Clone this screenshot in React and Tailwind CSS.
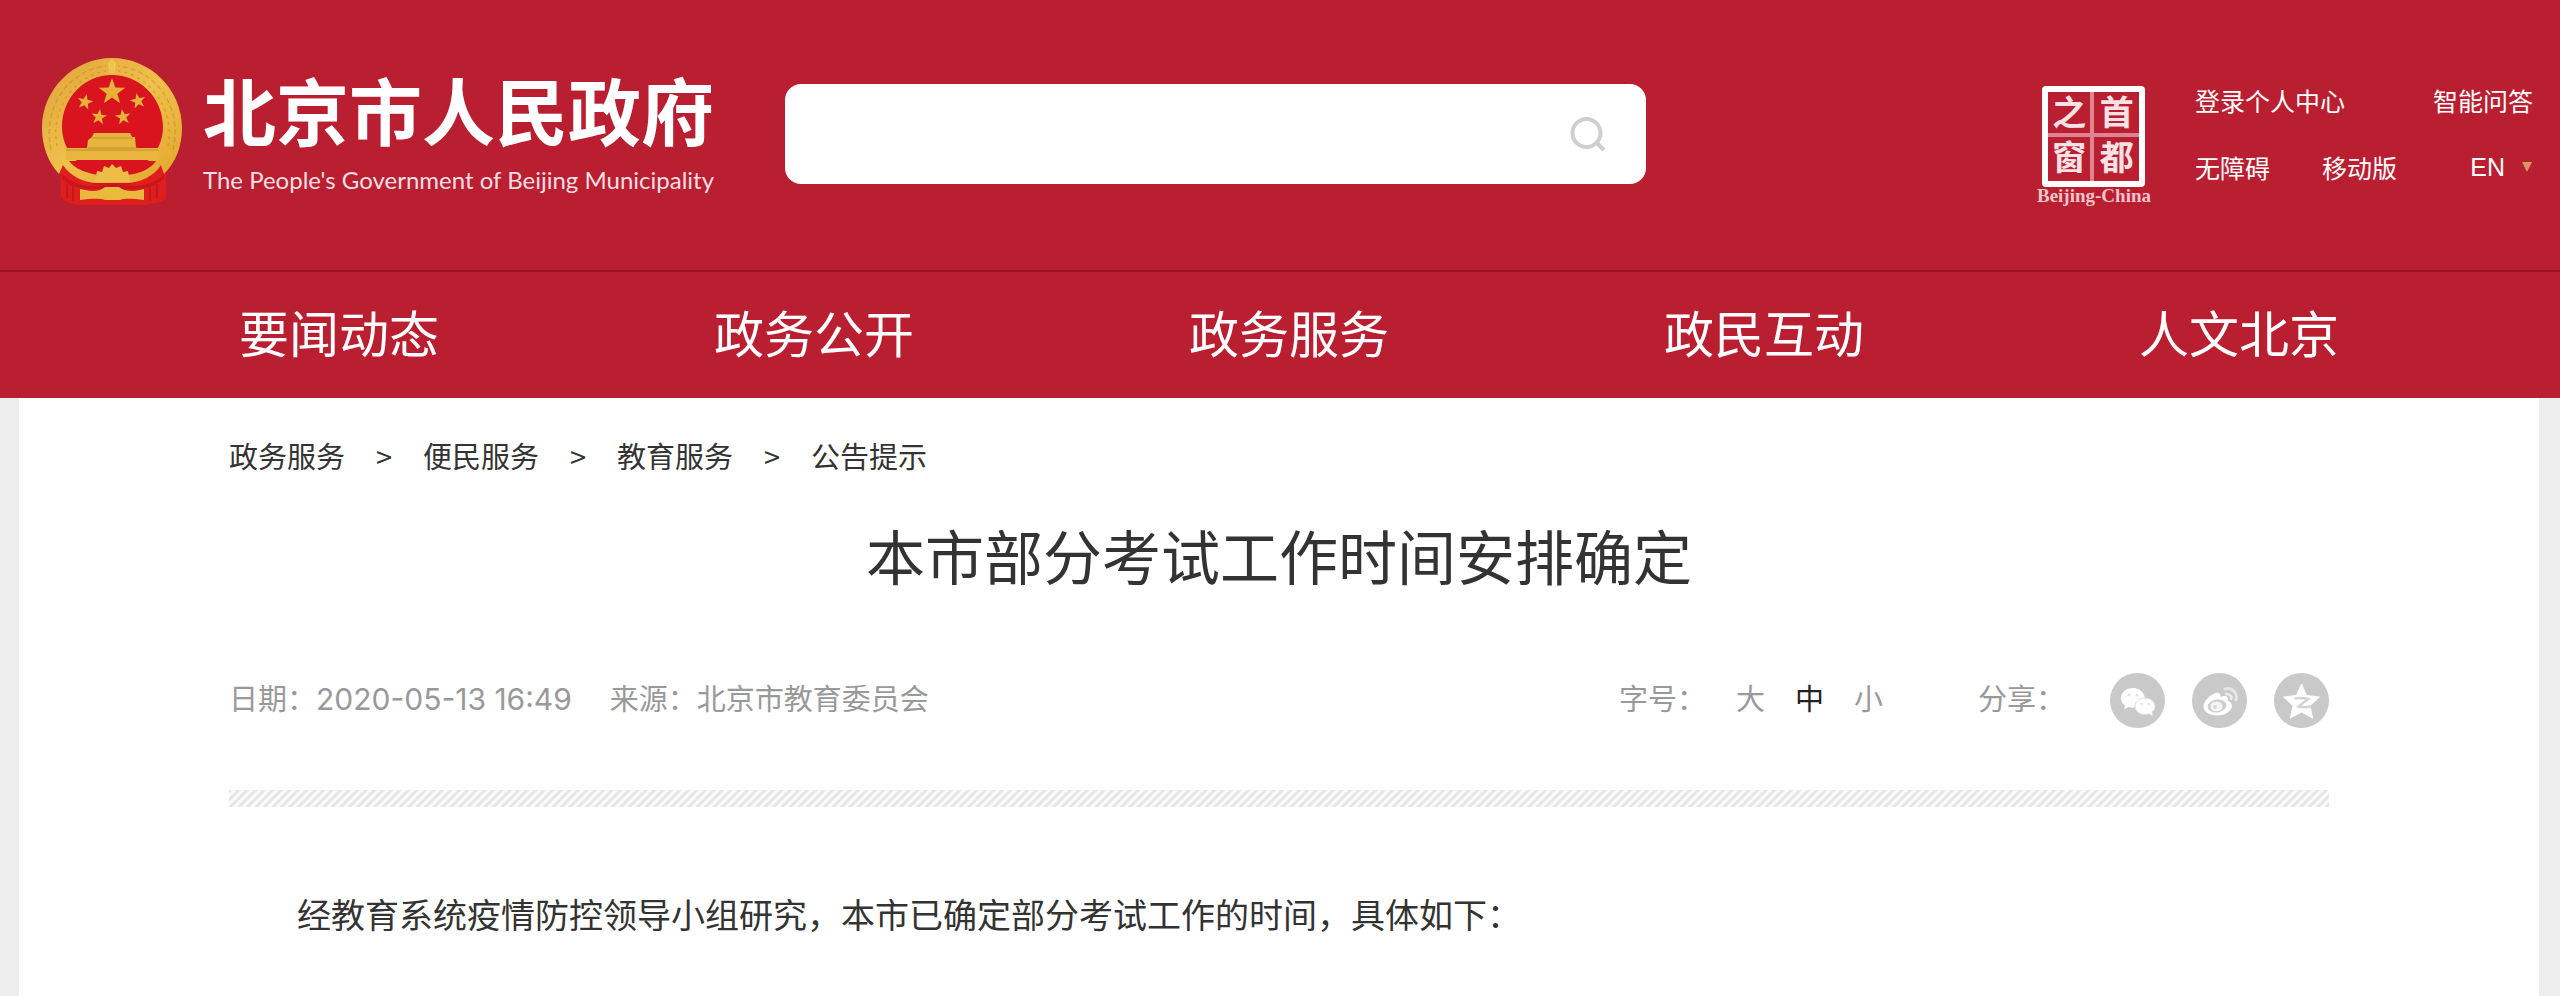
import React from "react";

const STAR = "M0,-10 L2.35,-3.24 9.51,-3.09 3.8,1.24 5.88,8.09 0,4 -5.88,8.09 -3.8,1.24 -9.51,-3.09 -2.35,-3.24Z";

function Emblem() {
  return (
    <svg viewBox="0 0 140 148" className="h-[148px] w-[140px] shrink-0" role="img" aria-label="国徽">
      <defs>
        <linearGradient id="gold" x1="0" y1="0" x2="1" y2="1">
          <stop offset="0" stopColor="#dfa33a" />
          <stop offset="0.5" stopColor="#f0c04a" />
          <stop offset="1" stopColor="#e2a52c" />
        </linearGradient>
      </defs>
      <path d="M18 104 H124 L124 140 C120 146 110 144 104 147 H34 C28 145 22 144 19 138Z" fill="#e01e1e" />
      <circle cx="70" cy="69" r="60" fill="#d9141f" />
      <path
        fillRule="evenodd"
        fill="url(#gold)"
        d="M70 0 C108 0 140 31 140 70 C140 88 134 104 122 116 L119 107 C112 118 98 125 84 125 L56 125 C42 125 28 118 21 107 L17 116 C6 104 0 88 0 70 C0 31 32 0 70 0Z M70 17 C42 17 20 40 20 69 C20 94 40 112 58 116 L82 116 C101 111 121 94 121 69 C121 40 98 17 70 17Z"
      />
      <g fill="none" stroke="#b97d22" strokeOpacity="0.4" strokeWidth="1.5">
        <path d="M9 92 C0 50 26 12 64 8" strokeDasharray="5 3" />
        <path d="M131 92 C141 50 115 12 76 8" strokeDasharray="5 3" />
        <path d="M15 88 C8 52 32 18 64 13" strokeDasharray="3 4" />
        <path d="M126 88 C133 52 109 18 76 13" strokeDasharray="3 4" />
      </g>
      <path d="M66 5 L70 1 L74 5 L73 15 L67 15Z" fill="#f0c355" />
      <g fill="#e6b13a">
        <path d={STAR} transform="translate(70 34) scale(1.4)" />
        <path d={STAR} transform="translate(43 44) scale(0.82) rotate(12)" />
        <path d={STAR} transform="translate(96 43) scale(0.82) rotate(-12)" />
        <path d={STAR} transform="translate(57 59) scale(0.82) rotate(8)" />
        <path d={STAR} transform="translate(81 59) scale(0.82) rotate(-8)" />
      </g>
      <path d="M52 75 H88 L90 79 H93 L94 90 H117 V102 H24 V90 H45 L46 82 L50 79Z" fill="#e8b63f" />
      <path d="M50 80 H91 M46 90 H95 M24 92 H117" stroke="#c48d2c" strokeWidth="1" />
      <path d="M27 103 H114 C108 112 96 116 84 117 H56 C44 115 33 111 27 103Z" fill="#d9141f" />
      <path d="M53 124 L55 113 L60 114 L62 108 L67 110 L70 106 L74 110 L79 108 L81 114 L86 113 L88 124Z" fill="#edbd45" />
      <path d="M20 116 C34 130 50 129 70 126 C92 129 108 130 122 116 L122 121 C106 134 90 131 70 130 C50 131 34 134 20 121Z" fill="#c9151b" />
      <path d="M38 131 C50 134 58 134 63 129 H77 C82 134 92 134 102 131 V142 C92 141 84 140 78 142 H63 C56 140 48 141 38 142Z" fill="#eaba3e" />
      <path d="M25 126 V141 M31 128 V143 M108 128 V143 M115 126 V141" stroke="#b81821" strokeWidth="1.5" />
    </svg>
  );
}

function Seal() {
  return (
    <a href="#" className="mt-1 flex shrink-0 flex-col items-center">
      <span className="grid h-[101px] w-[103px] grid-cols-2 grid-rows-2 rounded-sm border-[6px] border-white text-center text-[34px] leading-[38px] font-bold text-[#fae1e4]">
        <span className="border-r-4 border-b-4 border-[#dd8490]">之</span>
        <span className="border-b-4 border-[#dd8490]">首</span>
        <span className="border-r-4 border-[#dd8490]">窗</span>
        <span>都</span>
      </span>
      <span className="font-['Liberation_Serif',serif] text-[19px] leading-[18px] font-bold text-[#f0c4ca]">Beijing-China</span>
    </a>
  );
}

const NAV = ["要闻动态", "政务公开", "政务服务", "政民互动", "人文北京"];
const CRUMBS = ["政务服务", "便民服务", "教育服务", "公告提示"];

function Header() {
  return (
    <header className="bg-[#ba1e31] text-white">
      <div className="flex h-[270px] items-start pr-[27px] pl-[42px]">
        <a href="#" className="mt-[58px] flex shrink-0 items-start">
          <Emblem />
          <span className="ml-[21px] flex w-[511px] flex-col gap-1 whitespace-nowrap">
            <span className="text-[73px] leading-[100px] font-bold">北京市人民政府</span>
            <span className="font-['Lato',sans-serif] text-[24px] leading-[36px] text-[#f7dfe2]">
              The People's Government of Beijing Municipality
            </span>
          </span>
        </a>
        <form className="mt-[84px] ml-[71px] flex h-[100px] w-[861px] items-center rounded-2xl bg-white pr-10" onSubmit={(e) => e.preventDefault()}>
          <input type="search" aria-label="搜索" className="h-full min-w-0 flex-1 rounded-2xl px-6 text-[30px] text-gray-800 outline-none" />
          <button type="submit" aria-label="搜索" className="shrink-0">
            <svg viewBox="0 0 38 38" className="size-[38px]" fill="none" stroke="#cfcfcf">
              <circle cx="18.5" cy="18" r="14" strokeWidth="4" />
              <path d="M29 28 L36 35" strokeWidth="4" />
            </svg>
          </button>
        </form>
        <div className="mt-[82px] ml-auto flex">
          <Seal />
          <div className="ml-[44px] flex w-[338px] flex-col gap-[31px] text-[25px] leading-[36px]">
            <div className="flex justify-between">
              <a href="#">登录个人中心</a>
              <a href="#">智能问答</a>
            </div>
            <div className="flex items-center">
              <a href="#">无障碍</a>
              <a href="#" className="ml-[52px]">移动版</a>
              <a href="#" className="ml-auto flex items-center gap-[16px] font-['Liberation_Sans',sans-serif]">
                EN
                <svg viewBox="0 0 12 10" className="h-[10px] w-[12px]" aria-hidden="true">
                  <path d="M1 0H11L6 10Z" fill="#d9975f" />
                </svg>
              </a>
            </div>
          </div>
        </div>
      </div>
      <nav className="flex h-[128px] items-center justify-between border-t-2 border-[#9a1422] pr-[221px] pb-[8px] pl-[239px] text-[50px] leading-[70px]">
        {NAV.map((n) => (
          <a key={n} href="#">{n}</a>
        ))}
      </nav>
    </header>
  );
}

function ShareIcons() {
  return (
    <div className="flex gap-[27px]">
      <button type="button" aria-label="微信">
        <svg viewBox="0 0 55 55" className="size-[55px]">
          <circle cx="27.5" cy="27.5" r="27.5" fill="#c9c9c9" />
          <path d="M23 15C16 15 11 19.5 11 25C11 28 12.5 30.5 15 32.5L14 36.5L18.5 34C20 34.5 21.5 34.7 24 34.7L35 25C34 19 29 15 23 15Z" fill="#fff" />
          <path d="M35 25C29.5 25 25 28.5 25 33.2C25 38 29.5 41.5 35 41.5C36.5 41.5 37.8 41.2 39 40.8L43 43L42 39.2C44 37.7 45 35.5 45 33.2C45 28.5 40.5 25 35 25Z" fill="#fff" stroke="#dedede" strokeWidth="1" />
          <g fill="#e2e2e2">
            <circle cx="19" cy="22" r="1.5" /><circle cx="27" cy="22" r="1.5" />
            <circle cx="31.5" cy="31" r="1.3" /><circle cx="38.5" cy="31" r="1.3" />
          </g>
        </svg>
      </button>
      <button type="button" aria-label="微博">
        <svg viewBox="0 0 55 55" className="size-[55px]">
          <circle cx="27.5" cy="27.5" r="27.5" fill="#c9c9c9" />
          <path d="M24 20C17 22 11.5 28.5 11.5 33.5C11.5 39 17.5 42.5 25 42.5C34 42.5 40 37.5 40 33C40 30 38 28.5 36 27.8C36.5 25 35.5 23 32.5 23C31 23 29.5 23.5 28.5 24C28.8 21 27.5 19 24 20Z" fill="#fff" />
          <ellipse cx="25" cy="33" rx="9.5" ry="6.5" fill="#cfcfcf" transform="rotate(-8 25 33)" />
          <ellipse cx="24.5" cy="33.5" rx="6" ry="4.8" fill="#f6f6f6" />
          <circle cx="23" cy="34" r="2" fill="#d8d8d8" />
          <path d="M33 16C40 14 46 20 44 27" fill="none" stroke="#e6e6e6" strokeWidth="3" strokeLinecap="round" />
          <path d="M34 21C37.5 20.5 40 23 39.2 26" fill="none" stroke="#ececec" strokeWidth="2.5" strokeLinecap="round" />
        </svg>
      </button>
      <button type="button" aria-label="QQ空间">
        <svg viewBox="0 0 55 55" className="size-[55px]">
          <circle cx="27.5" cy="27.5" r="27.5" fill="#c9c9c9" />
          <path d="M27.5 11L32.5 22.5L45.5 24L36 32.5L38.5 45L27.5 39L16.5 45L19 32.5L9.5 24L22.5 22.5Z" fill="#fff" strokeLinejoin="round" stroke="#fff" strokeWidth="1" />
          <path d="M20.5 25.5C26 24.5 30 25 34 26L24.5 33.5C29 34.5 32 34.5 37 33.5" fill="none" stroke="#d4d4d4" strokeWidth="2.5" />
        </svg>
      </button>
    </div>
  );
}

export default function App() {
  return (
    <div lang="zh-CN" className="min-h-screen bg-[#ededed] font-['Noto_Sans_CJK_SC',sans-serif] text-[#333333]">
      <Header />
      <main className="mr-[21px] ml-[19px] min-h-[598px] bg-white px-[210px] pt-[36px]">
        <nav aria-label="面包屑" className="flex text-[29px] leading-[42px]">
          {CRUMBS.map((c, i) => (
            <React.Fragment key={c}>
              {i > 0 && <span className="w-[78px] text-center">&gt;</span>}
              <a href="#">{c}</a>
            </React.Fragment>
          ))}
        </nav>
        <h1 className="mt-[37px] text-center text-[59px] leading-[84px]">本市部分考试工作时间安排确定</h1>
        <div className="mt-[76px] flex items-start text-[29px] leading-[49px] text-[#999999]">
          <p>日期：<span className="font-['Inter',sans-serif] text-[30px] leading-none">2020-05-13 16:49</span></p>
          <p className="ml-[38px]">来源：北京市教育委员会</p>
          <div className="ml-auto flex items-start">
            <span>字号：</span>
            <div className="ml-[30px] flex gap-[30px]">
              <button type="button">大</button>
              <button type="button" className="text-[#222222]">中</button>
              <button type="button">小</button>
            </div>
            <span className="mr-[45px] ml-[95px]">分享：</span>
            <ShareIcons />
          </div>
        </div>
        <div className="mt-[62px] h-[17px] bg-[repeating-linear-gradient(135deg,#e6e6e6_0px,#e6e6e6_2px,#fbfbfb_3px,#fbfbfb_5px,#e6e6e6_6px)]" />
        <p className="mt-[82px] indent-[68px] text-[34px] leading-[50px]">
          经教育系统疫情防控领导小组研究，本市已确定部分考试工作的时间，具体如下：
        </p>
      </main>
    </div>
  );
}
